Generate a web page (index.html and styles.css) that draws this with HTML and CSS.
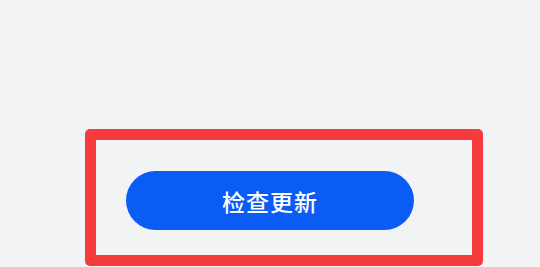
FILE: index.html
```html
<!DOCTYPE html>
<html lang="zh">

<head>
    <meta charset="UTF-8">
    <meta name="viewport" content="width=device-width, initial-scale=1.0">
    <title>检查更新</title>
    <link rel="stylesheet" href="styles.css">
</head>

<body>

    <div class="page">
        <div class="actions">
            <button class="update-btn">检查更新</button>
        </div>
    </div>

    <!-- 标注框 -->
    <div class="highlight"></div>

</body>

</html>
```

FILE: styles.css
```css
html,
body {
    margin: 0;
    padding: 0;
}

body {
    font-family: "Noto Sans CJK SC", "Noto Sans", sans-serif;
    background-color: #f2f3f5;
    width: 540px;
    height: 267px;
    overflow: hidden;
    position: relative;
}

.page {
    padding-top: 171px;
}

.actions {
    display: flex;
    justify-content: center;
}

.update-btn {
    width: 288px;
    height: 59px;
    border: none;
    border-radius: 30px;
    background-color: #0a5cf5;
    color: #ffffff;
    font-family: inherit;
    font-size: 23px;
    font-weight: 500;
    letter-spacing: 1px;
    padding: 0;
}

.highlight {
    position: absolute;
    left: 85px;
    top: 129px;
    width: 376px;
    height: 115px;
    border: 11px solid #f53b3b;
    border-radius: 5px;
}
```
